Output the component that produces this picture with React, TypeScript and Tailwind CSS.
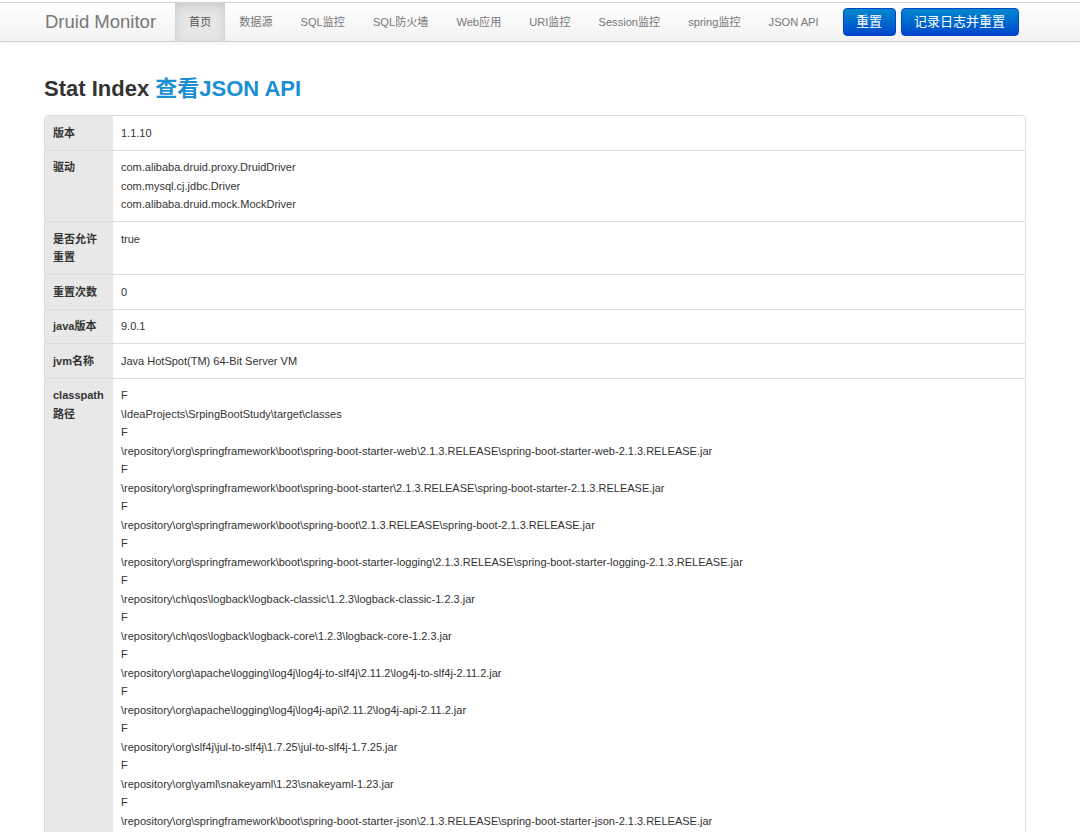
const navItems = ["首页", "数据源", "SQL监控", "SQL防火墙", "Web应用", "URI监控", "Session监控", "spring监控", "JSON API"];

const jars = [
  "\\IdeaProjects\\SrpingBootStudy\\target\\classes",
  "\\repository\\org\\springframework\\boot\\spring-boot-starter-web\\2.1.3.RELEASE\\spring-boot-starter-web-2.1.3.RELEASE.jar",
  "\\repository\\org\\springframework\\boot\\spring-boot-starter\\2.1.3.RELEASE\\spring-boot-starter-2.1.3.RELEASE.jar",
  "\\repository\\org\\springframework\\boot\\spring-boot\\2.1.3.RELEASE\\spring-boot-2.1.3.RELEASE.jar",
  "\\repository\\org\\springframework\\boot\\spring-boot-starter-logging\\2.1.3.RELEASE\\spring-boot-starter-logging-2.1.3.RELEASE.jar",
  "\\repository\\ch\\qos\\logback\\logback-classic\\1.2.3\\logback-classic-1.2.3.jar",
  "\\repository\\ch\\qos\\logback\\logback-core\\1.2.3\\logback-core-1.2.3.jar",
  "\\repository\\org\\apache\\logging\\log4j\\log4j-to-slf4j\\2.11.2\\log4j-to-slf4j-2.11.2.jar",
  "\\repository\\org\\apache\\logging\\log4j\\log4j-api\\2.11.2\\log4j-api-2.11.2.jar",
  "\\repository\\org\\slf4j\\jul-to-slf4j\\1.7.25\\jul-to-slf4j-1.7.25.jar",
  "\\repository\\org\\yaml\\snakeyaml\\1.23\\snakeyaml-1.23.jar",
  "\\repository\\org\\springframework\\boot\\spring-boot-starter-json\\2.1.3.RELEASE\\spring-boot-starter-json-2.1.3.RELEASE.jar",
  "\\repository\\com\\fasterxml\\jackson\\core\\jackson-databind\\2.9.8\\jackson-databind-2.9.8.jar",
];

const rows: { label: React.ReactNode; value: React.ReactNode }[] = [
  { label: "版本", value: "1.1.10" },
  {
    label: "驱动",
    value: (
      <>
        <div>com.alibaba.druid.proxy.DruidDriver</div>
        <div>com.mysql.cj.jdbc.Driver</div>
        <div>com.alibaba.druid.mock.MockDriver</div>
      </>
    ),
  },
  {
    label: (
      <>
        是否允许
        <br />
        重置
      </>
    ),
    value: "true",
  },
  { label: "重置次数", value: "0" },
  { label: "java版本", value: "9.0.1" },
  { label: "jvm名称", value: "Java HotSpot(TM) 64-Bit Server VM" },
  {
    label: (
      <>
        classpath
        <br />
        路径
      </>
    ),
    value: (
      <>
        {jars.map((j, i) => (
          <div key={i}>
            <div>F</div>
            <div>{j}</div>
          </div>
        ))}
      </>
    ),
  },
];

export default function App() {
  return (
    <div
      className="min-h-screen bg-white text-[#333]"
      style={{ fontFamily: '"Liberation Sans", Arial, "Noto Sans CJK SC", sans-serif' }}
    >
      <div className="mt-[2px] h-[40px] border-y border-[#d4d4d4] bg-gradient-to-b from-white to-[#f2f2f2] shadow-[0_1px_4px_rgba(0,0,0,0.065)]">
        <div className="flex h-full items-center pl-[45px]">
          <div className="mr-[19px] text-[18.5px] text-[#777]">Druid Monitor</div>
          <div className="flex h-full">
            {navItems.map((n, i) => (
              <div
                key={n}
                className={
                  "flex h-full items-center px-[14px] text-[11.1px] " +
                  (i === 0
                    ? "bg-[#e5e5e5] text-[#555] shadow-[inset_0_3px_8px_rgba(0,0,0,0.125)]"
                    : "text-[#777]")
                }
              >
                {n}
              </div>
            ))}
          </div>
          <div className="ml-[10px] flex gap-[5px]">
            <div className="flex h-[28px] w-[53px] items-center justify-center rounded-[4px] border border-[#0044cc] bg-gradient-to-b from-[#0088cc] to-[#0044cc] text-[13px] text-white">
              重置
            </div>
            <div className="flex h-[28px] w-[118px] items-center justify-center rounded-[4px] border border-[#0044cc] bg-gradient-to-b from-[#0088cc] to-[#0044cc] text-[13px] text-white">
              记录日志并重置
            </div>
          </div>
        </div>
      </div>

      <div className="pl-[44px] pr-[54px]">
        <h1 className="mt-[32px] mb-[11px] text-[22px] font-bold leading-[30px]">
          Stat Index <span className="text-[#1a8fd3]">查看JSON API</span>
        </h1>
        <div className="overflow-hidden rounded-[4px] border border-[#dddddd] text-[11px] leading-[18.5px]">
          {rows.map((r, i) => (
            <div key={i} className={"flex " + (i > 0 ? "border-t border-[#dddddd]" : "")}>
              <div className="w-[68px] shrink-0 bg-[#e8e8e8] px-[8px] py-[7.5px] font-bold">{r.label}</div>
              <div className="flex-1 px-[8px] py-[7.5px]">{r.value}</div>
            </div>
          ))}
        </div>
      </div>
    </div>
  );
}
